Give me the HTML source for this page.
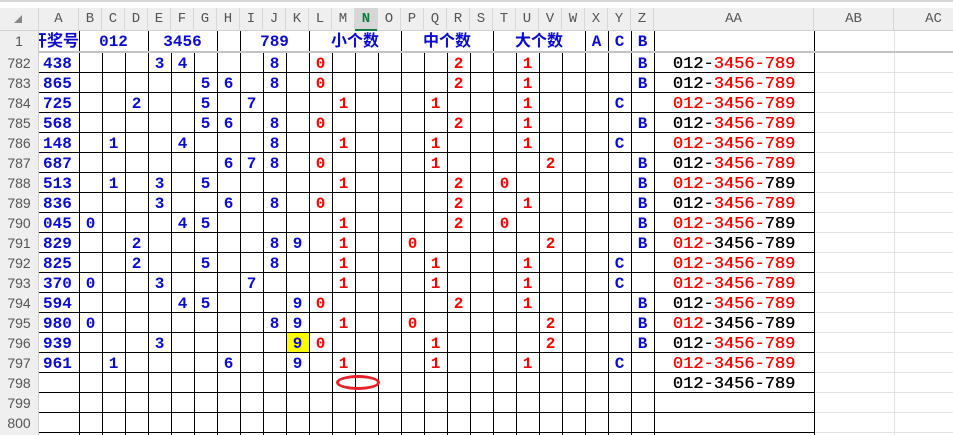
<!DOCTYPE html>
<html><head><meta charset="utf-8"><style>
*{margin:0;padding:0;box-sizing:border-box}
body{width:953px;height:435px;overflow:hidden;background:#fff;position:relative;font-family:"Liberation Mono","Noto Sans CJK SC",monospace}
.abs{position:absolute}
#top{left:0;top:0;width:953px;height:8px;background:#fff;border-top:2px solid #d6d6d6}
#colh{left:0;top:8px;width:953px;height:23px;background:#efefef;border-bottom:1px solid #d0d0d0}
#rowh{left:0;top:31px;width:39px;height:404px;background:#efefef;border-right:1px solid #d0d0d0}
.ch{position:absolute;top:8px;height:23px;line-height:23px;text-align:center;color:#555;font-size:14px;border-right:1px solid #d8d8d8}
.rh{position:absolute;left:0;width:38px;height:20px;line-height:20px;text-align:center;color:#555;font-size:14px;font-family:"Liberation Sans",sans-serif}
.v{position:absolute;width:1px;background:#000}
.g{position:absolute;width:1px;background:#e2e2e2}
.r{position:absolute;left:0;height:20px;width:953px}
.c{position:absolute;top:1px;width:23px;height:20px;line-height:20px;text-align:center;font-weight:bold;font-size:16px}
.b{color:#0a0ad0}.d{color:#ff0000}.k{color:#000}
.A{left:39px;width:40px;text-align:left;padding-left:4px}
.B{left:79px}.C{left:102px}.D{left:125px}.E{left:148px}.F{left:171px}.G{left:194px}.H{left:217px}.I{left:240px}.J{left:263px}.K{left:286px}.L{left:309px}.M{left:332px}.N{left:355px}.O{left:378px}.P{left:401px}.Q{left:424px}.R{left:447px}.S{left:470px}.T{left:493px}.U{left:516px}.V{left:539px}.W{left:562px}.X{left:585px}.Y{left:608px}.Z{left:631px}
.AA{left:654px;top:2px;width:160px;font-weight:normal;font-size:17px;text-shadow:0.4px 0 0 currentColor}
.h1{position:absolute;top:32px;height:20px;line-height:20px;text-align:center;font-weight:bold;font-size:16px;color:#0a0ad0}
</style></head><body>
<div id="top" class="abs"></div>
<div id="colh" class="abs"></div>
<div class="abs" style="left:355px;top:8px;width:23px;height:23px;background:#d6d6d6;border-bottom:2px solid #107c41"></div>
<div class="abs" style="left:14px;top:15px;width:0;height:0;border-left:8px solid transparent;border-bottom:8px solid #888"></div>
<div class="ch" style="left:0;width:39px"></div>
<div class="ch" style="left:39px;width:40px">A</div>
<div class="ch" style="left:79px;width:23px">B</div><div class="ch" style="left:102px;width:23px">C</div><div class="ch" style="left:125px;width:23px">D</div><div class="ch" style="left:148px;width:23px">E</div><div class="ch" style="left:171px;width:23px">F</div><div class="ch" style="left:194px;width:23px">G</div><div class="ch" style="left:217px;width:23px">H</div><div class="ch" style="left:240px;width:23px">I</div><div class="ch" style="left:263px;width:23px">J</div><div class="ch" style="left:286px;width:23px">K</div><div class="ch" style="left:309px;width:23px">L</div><div class="ch" style="left:332px;width:23px">M</div><div class="ch" style="left:355px;width:23px;color:#107c41;font-weight:bold">N</div><div class="ch" style="left:378px;width:23px">O</div><div class="ch" style="left:401px;width:23px">P</div><div class="ch" style="left:424px;width:23px">Q</div><div class="ch" style="left:447px;width:23px">R</div><div class="ch" style="left:470px;width:23px">S</div><div class="ch" style="left:493px;width:23px">T</div><div class="ch" style="left:516px;width:23px">U</div><div class="ch" style="left:539px;width:23px">V</div><div class="ch" style="left:562px;width:23px">W</div><div class="ch" style="left:585px;width:23px">X</div><div class="ch" style="left:608px;width:23px">Y</div><div class="ch" style="left:631px;width:23px">Z</div>
<div class="ch" style="left:654px;width:160px">AA</div><div class="ch" style="left:814px;width:80px">AB</div><div class="ch" style="left:894px;width:80px">AC</div>
<div id="rowh" class="abs"></div>
<div class="rh" style="top:31px">1</div>
<div class="rh" style="top:53px">782</div><div class="rh" style="top:73px">783</div><div class="rh" style="top:93px">784</div><div class="rh" style="top:113px">785</div><div class="rh" style="top:133px">786</div><div class="rh" style="top:153px">787</div><div class="rh" style="top:173px">788</div><div class="rh" style="top:193px">789</div><div class="rh" style="top:213px">790</div><div class="rh" style="top:233px">791</div><div class="rh" style="top:253px">792</div><div class="rh" style="top:273px">793</div><div class="rh" style="top:293px">794</div><div class="rh" style="top:313px">795</div><div class="rh" style="top:333px">796</div><div class="rh" style="top:353px">797</div><div class="rh" style="top:373px">798</div><div class="rh" style="top:393px">799</div><div class="rh" style="top:413px">800</div>
<div class="abs" style="left:814px;top:72px;width:139px;height:363px;background-image:repeating-linear-gradient(to bottom,#e2e2e2 0 1px,transparent 1px 20px)"></div>
<div class="g" style="left:894px;top:31px;height:404px"></div>
<div class="v" style="left:79px;top:31px;height:21px"></div><div class="v" style="left:148px;top:31px;height:21px"></div><div class="v" style="left:217px;top:31px;height:21px"></div><div class="v" style="left:240px;top:31px;height:21px"></div><div class="v" style="left:309px;top:31px;height:21px"></div><div class="v" style="left:401px;top:31px;height:21px"></div><div class="v" style="left:493px;top:31px;height:21px"></div><div class="v" style="left:585px;top:31px;height:21px"></div><div class="v" style="left:608px;top:31px;height:21px"></div><div class="v" style="left:631px;top:31px;height:21px"></div><div class="v" style="left:654px;top:31px;height:21px"></div><div class="v" style="left:814px;top:31px;height:21px"></div>
<div class="abs" style="left:39px;top:72px;width:776px;height:363px;background-image:repeating-linear-gradient(to bottom,#000 0 1px,transparent 1px 20px)"></div>
<div class="abs" style="left:79px;top:52px;width:576px;height:383px;background-image:repeating-linear-gradient(to right,#000 0 1px,transparent 1px 23px)"></div>
<div class="v" style="left:814px;top:52px;height:383px"></div>
<div class="abs" style="left:39px;top:51px;width:914px;height:2px;background:#c4c4c4"></div>
<div class="abs" style="left:287px;top:333px;width:22px;height:19px;background:#ffff00"></div>
<div class="h1" style="left:39px;width:40px;overflow:hidden;text-align:right;font-family:'Liberation Sans','Noto Sans CJK SC',sans-serif;white-space:nowrap"><span style="display:inline-block;margin-left:-10px">开奖号</span></div>
<div class="h1" style="left:79px;width:69px">012</div>
<div class="h1" style="left:148px;width:69px">3456</div>
<div class="h1" style="left:240px;width:69px">789</div>
<div class="h1" style="left:309px;width:92px;font-family:'Liberation Sans','Noto Sans CJK SC',sans-serif">小个数</div>
<div class="h1" style="left:401px;width:92px;font-family:'Liberation Sans','Noto Sans CJK SC',sans-serif">中个数</div>
<div class="h1" style="left:493px;width:92px;font-family:'Liberation Sans','Noto Sans CJK SC',sans-serif">大个数</div>
<div class="h1" style="left:585px;width:23px">A</div><div class="h1" style="left:608px;width:23px">C</div><div class="h1" style="left:631px;width:23px">B</div>

<div class="r" style="top:53px"><div class="c b A">438</div><div class="c b E">3</div><div class="c b F">4</div><div class="c b J">8</div><div class="c d L">0</div><div class="c d R">2</div><div class="c d U">1</div><div class="c b Z">B</div><div class="c AA"><span class="k">012-</span><span class="d">3456-789</span></div></div>
<div class="r" style="top:73px"><div class="c b A">865</div><div class="c b G">5</div><div class="c b H">6</div><div class="c b J">8</div><div class="c d L">0</div><div class="c d R">2</div><div class="c d U">1</div><div class="c b Z">B</div><div class="c AA"><span class="k">012-</span><span class="d">3456-789</span></div></div>
<div class="r" style="top:93px"><div class="c b A">725</div><div class="c b D">2</div><div class="c b G">5</div><div class="c b I">7</div><div class="c d M">1</div><div class="c d Q">1</div><div class="c d U">1</div><div class="c b Y">C</div><div class="c AA"><span class="d">012-3456-789</span></div></div>
<div class="r" style="top:113px"><div class="c b A">568</div><div class="c b G">5</div><div class="c b H">6</div><div class="c b J">8</div><div class="c d L">0</div><div class="c d R">2</div><div class="c d U">1</div><div class="c b Z">B</div><div class="c AA"><span class="k">012-</span><span class="d">3456-789</span></div></div>
<div class="r" style="top:133px"><div class="c b A">148</div><div class="c b C">1</div><div class="c b F">4</div><div class="c b J">8</div><div class="c d M">1</div><div class="c d Q">1</div><div class="c d U">1</div><div class="c b Y">C</div><div class="c AA"><span class="d">012-3456-789</span></div></div>
<div class="r" style="top:153px"><div class="c b A">687</div><div class="c b H">6</div><div class="c b I">7</div><div class="c b J">8</div><div class="c d L">0</div><div class="c d Q">1</div><div class="c d V">2</div><div class="c b Z">B</div><div class="c AA"><span class="k">012-</span><span class="d">3456-789</span></div></div>
<div class="r" style="top:173px"><div class="c b A">513</div><div class="c b C">1</div><div class="c b E">3</div><div class="c b G">5</div><div class="c d M">1</div><div class="c d R">2</div><div class="c d T">0</div><div class="c b Z">B</div><div class="c AA"><span class="d">012-3456-</span><span class="k">789</span></div></div>
<div class="r" style="top:193px"><div class="c b A">836</div><div class="c b E">3</div><div class="c b H">6</div><div class="c b J">8</div><div class="c d L">0</div><div class="c d R">2</div><div class="c d U">1</div><div class="c b Z">B</div><div class="c AA"><span class="k">012-</span><span class="d">3456-789</span></div></div>
<div class="r" style="top:213px"><div class="c b A">045</div><div class="c b B">0</div><div class="c b F">4</div><div class="c b G">5</div><div class="c d M">1</div><div class="c d R">2</div><div class="c d T">0</div><div class="c b Z">B</div><div class="c AA"><span class="d">012-3456-</span><span class="k">789</span></div></div>
<div class="r" style="top:233px"><div class="c b A">829</div><div class="c b D">2</div><div class="c b J">8</div><div class="c b K">9</div><div class="c d M">1</div><div class="c d P">0</div><div class="c d V">2</div><div class="c b Z">B</div><div class="c AA"><span class="d">012-</span><span class="k">3456-789</span></div></div>
<div class="r" style="top:253px"><div class="c b A">825</div><div class="c b D">2</div><div class="c b G">5</div><div class="c b J">8</div><div class="c d M">1</div><div class="c d Q">1</div><div class="c d U">1</div><div class="c b Y">C</div><div class="c AA"><span class="d">012-3456-789</span></div></div>
<div class="r" style="top:273px"><div class="c b A">370</div><div class="c b B">0</div><div class="c b E">3</div><div class="c b I">7</div><div class="c d M">1</div><div class="c d Q">1</div><div class="c d U">1</div><div class="c b Y">C</div><div class="c AA"><span class="d">012-3456-789</span></div></div>
<div class="r" style="top:293px"><div class="c b A">594</div><div class="c b F">4</div><div class="c b G">5</div><div class="c b K">9</div><div class="c d L">0</div><div class="c d R">2</div><div class="c d U">1</div><div class="c b Z">B</div><div class="c AA"><span class="k">012-</span><span class="d">3456-789</span></div></div>
<div class="r" style="top:313px"><div class="c b A">980</div><div class="c b B">0</div><div class="c b J">8</div><div class="c b K">9</div><div class="c d M">1</div><div class="c d P">0</div><div class="c d V">2</div><div class="c b Z">B</div><div class="c AA"><span class="d">012</span><span class="k">-3456-789</span></div></div>
<div class="r" style="top:333px"><div class="c b A">939</div><div class="c b E">3</div><div class="c b K">9</div><div class="c d L">0</div><div class="c d Q">1</div><div class="c d V">2</div><div class="c b Z">B</div><div class="c AA"><span class="k">012-</span><span class="d">3456-789</span></div></div>
<div class="r" style="top:353px"><div class="c b A">961</div><div class="c b C">1</div><div class="c b H">6</div><div class="c b K">9</div><div class="c d M">1</div><div class="c d Q">1</div><div class="c d U">1</div><div class="c b Y">C</div><div class="c AA"><span class="d">012-3456-789</span></div></div>
<div class="r" style="top:373px"><div class="c AA"><span class="k">012-3456-789</span></div></div>
<div class="abs" style="left:336px;top:375px;width:44px;height:15px;border:3px solid #e8202a;border-radius:50%"></div>
</body></html>
